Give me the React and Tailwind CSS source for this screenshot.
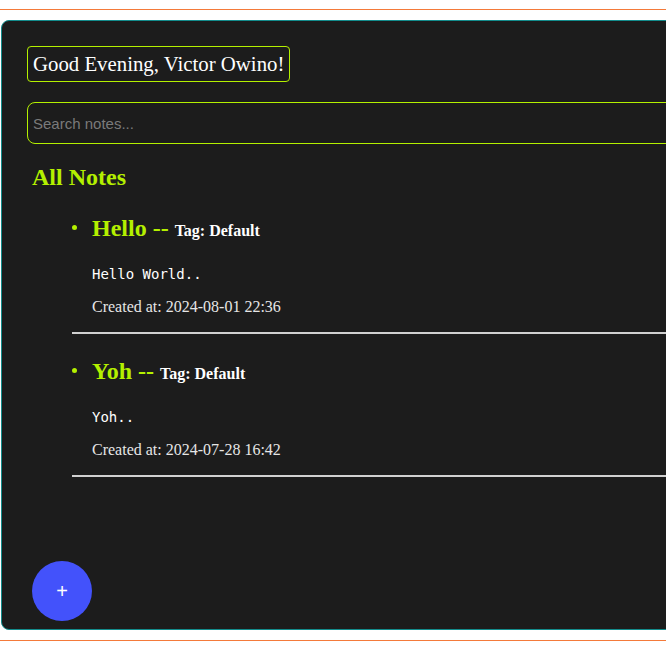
const notes = [
  { title: 'Hello', tag: 'Default', body: 'Hello World..', created: '2024-08-01 22:36' },
  { title: 'Yoh', tag: 'Default', body: 'Yoh..', created: '2024-07-28 16:42' },
];

const serif = "font-['Liberation_Serif',serif]";

const NoteItem = ({ note, first }) => (
  <li className={first ? 'mt-5' : 'mt-[21px]'}>
    <div className="flex items-baseline h-[30px] leading-[30px] pl-5 relative">
      <span className="absolute left-0 top-[13px] w-[5px] h-[5px] rounded-full bg-[#b4f000]" />
      <span className={`${serif} text-2xl font-bold text-[#b4f000]`}>{note.title} --</span>
      <span className={`${serif} text-base font-bold text-white ml-[6px]`}>Tag: {note.tag}</span>
    </div>
    <p className="mt-[22px] pl-5 h-5 leading-5 text-sm text-white font-['DejaVu_Sans_Mono',monospace]">
      {note.body}
    </p>
    <p className={`${serif} mt-[13px] pl-5 h-5 leading-5 text-base text-[#e6e6e6]`}>
      Created at: {note.created}
    </p>
    <div className="mt-[15px] h-[2px] bg-[#d0d0d0]" />
  </li>
);

export default function App() {
  return (
    <div className="w-full h-[646px] overflow-hidden bg-white">
      <div className="mt-[9px] h-px bg-[#f47a3a]" />
      <div className="relative mt-[10px] ml-px w-[760px] h-[610px] rounded-lg border border-[#138c8c] bg-[#1c1c1c] pl-[25px] pt-[25px]">
        <div className={`${serif} inline-block h-[36px] px-[5px] leading-[34px] text-[20.8px] text-white border border-[#b4f000] rounded`}>
          Good Evening, Victor Owino!
        </div>
        <input
          type="text"
          placeholder="Search notes..."
          className="block mt-5 w-[720px] h-[42px] rounded-lg border border-[#b4f000] bg-transparent px-[5px] text-[15px] text-white placeholder:text-[#7a7a7a] outline-none font-['Liberation_Sans',sans-serif]"
        />
        <h2 className={`${serif} mt-[18px] ml-[5px] h-[30px] leading-[30px] text-2xl font-bold text-[#b4f000]`}>
          All Notes
        </h2>
        <ul className="ml-[45px]">
          {notes.map((n, i) => (
            <NoteItem key={n.title} note={n} first={i === 0} />
          ))}
        </ul>
        <button className="absolute left-[30px] bottom-[8px] w-[60px] h-[60px] rounded-full bg-[#4352fb] text-white text-xl font-['Liberation_Sans',sans-serif] flex items-center justify-center">
          +
        </button>
      </div>
      <div className="mt-[10px] h-px bg-[#f47a3a]" />
    </div>
  );
}
